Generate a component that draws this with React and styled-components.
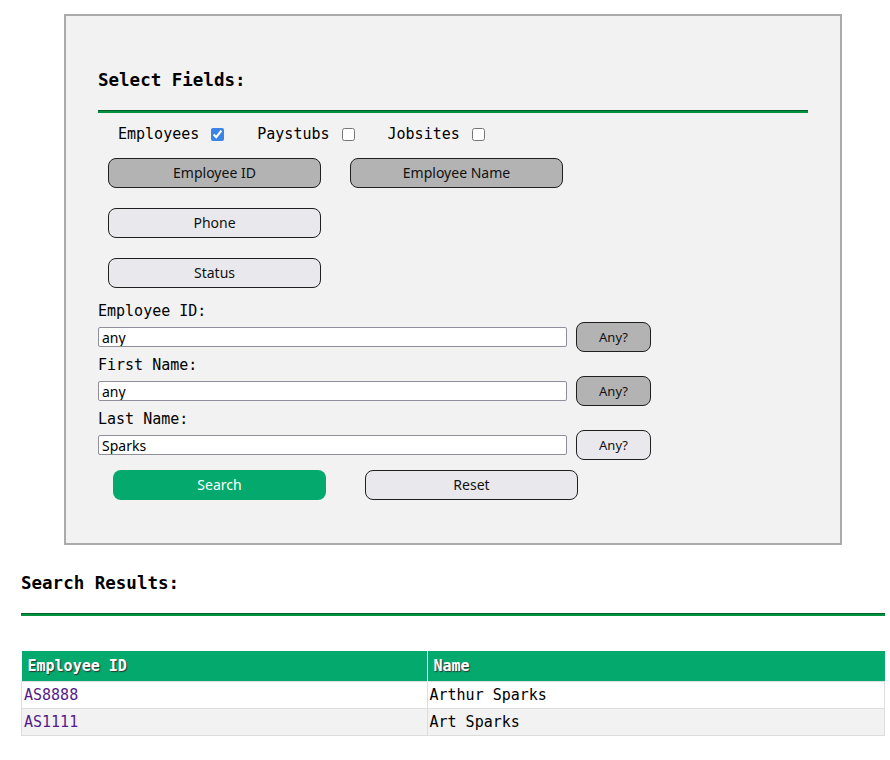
import React, { useState } from 'react';
import styled, { createGlobalStyle } from 'styled-components';

const GlobalStyle = createGlobalStyle`
  body {
    margin: 0;
    background: #ffffff;
    font-family: "DejaVu Sans Mono", monospace;
    font-size: 15px;
    color: #000;
  }
`;

const Page = styled.div`
  width: 864px;
  padding: 14px 0 20px 21px;
`;

const Panel = styled.section`
  box-sizing: border-box;
  width: 778px;
  margin: 0 auto;
  padding: 54px 32px 43px 32px;
  background: #f2f2f2;
  border: 2px solid #aaaaaa;
`;

const Heading = styled.h3`
  margin: 0;
  font-size: 17.5px;
  line-height: 20px;
  font-weight: bold;
`;

const Rule = styled.hr`
  margin: 20px 0 0 0;
  height: 0;
  border: none;
  border-top: 1px solid #00602b;
  border-bottom: 2px solid #00923f;
`;

const CheckRow = styled.div`
  display: flex;
  align-items: center;
  height: 20px;
  margin: 11px 0 0 20px;
`;

const CheckLabel = styled.label`
  display: flex;
  align-items: center;
  gap: 12px;
  margin-right: 33px;
  line-height: 20px;
`;

const Box = styled.input`
  width: 13px;
  height: 13px;
  margin: 0;
  accent-color: #3a84e6;
`;

const FieldGrid = styled.div`
  display: flex;
  flex-direction: column;
  gap: 20px;
  margin: 14px 0 0 10px;
`;

const FieldRow = styled.div`
  display: flex;
  gap: 29px;
`;

const PillButton = styled.button`
  box-sizing: border-box;
  width: ${p => p.$width || 213}px;
  height: 30px;
  padding: 0 0 1px 0;
  border: 1px solid #1f1f1f;
  border-radius: 8px;
  background: ${p => (p.$on ? '#b3b3b3' : '#e9e9ed')};
  color: #111;
  font-family: "Noto Sans", sans-serif;
  font-size: ${p => p.$size || 14}px;
  cursor: pointer;
`;

const SearchButton = styled(PillButton)`
  border: none;
  background: #04aa6d;
  color: #ffffff;
`;

const FieldList = styled.div`
  margin-top: 13px;
`;

const FieldLabel = styled.label`
  display: block;
  line-height: 20px;
`;

const InputRow = styled.div`
  display: flex;
  align-items: center;
  gap: 9px;
  margin: 1px 0 3px 0;
`;

const TextInput = styled.input`
  box-sizing: border-box;
  width: 469px;
  height: 20px;
  padding: 0 3px;
  border: 1px solid #8f8f9d;
  border-radius: 2px;
  background: #fff;
  font-family: "Noto Sans", sans-serif;
  font-size: 14px;
  color: #000;
`;

const ActionRow = styled.div`
  display: flex;
  gap: 39px;
  margin: 10px 0 0 15px;
`;

const Results = styled.section`
  margin-top: 28px;
`;

const Table = styled.table`
  width: 864px;
  margin-top: 35px;
  border-collapse: collapse;
  table-layout: fixed;
`;

const Th = styled.th`
  height: 30px;
  padding: 0 6px;
  text-align: left;
  background: #04aa6d;
  color: #ffffff;
  font-weight: bold;
  text-shadow: 1px 1px 1px #333;
  border-left: ${p => (p.$first ? 'none' : '1px solid #ffffff')};
  width: ${p => (p.$first ? '393px' : 'auto')};
`;

const Tr = styled.tr`
  background: ${p => (p.$alt ? '#f2f2f2' : '#ffffff')};
`;

const Td = styled.td`
  height: 26px;
  padding: 0 2px;
  border: 1px solid #dddddd;
`;

const IdLink = styled.a`
  color: #551a8b;
  text-decoration: none;
`;

const fieldRows = [
  [{ label: 'Employee ID', on: true }, { label: 'Employee Name', on: true }],
  [{ label: 'Phone', on: false }],
  [{ label: 'Status', on: false }],
];

const results = [
  { id: 'AS8888', name: 'Arthur Sparks' },
  { id: 'AS1111', name: 'Art Sparks' },
];

const App = () => {
  const [fields, setFields] = useState([
    { label: 'Employee ID:', value: 'any', any: true },
    { label: 'First Name:', value: 'any', any: true },
    { label: 'Last Name:', value: 'Sparks', any: false },
  ]);

  const handleChange = (i, value) => {
    setFields(fields.map((f, j) => (j === i ? { ...f, value } : f)));
  };

  return (
    <Page>
      <GlobalStyle />
      <Panel>
        <Heading>Select Fields:</Heading>
        <Rule />
        <CheckRow>
          <CheckLabel>Employees <Box type="checkbox" defaultChecked /></CheckLabel>
          <CheckLabel>Paystubs <Box type="checkbox" /></CheckLabel>
          <CheckLabel>Jobsites <Box type="checkbox" /></CheckLabel>
        </CheckRow>
        <FieldGrid>
          {fieldRows.map((row, i) => (
            <FieldRow key={i}>
              {row.map(b => (
                <PillButton key={b.label} $on={b.on}>{b.label}</PillButton>
              ))}
            </FieldRow>
          ))}
        </FieldGrid>
        <FieldList>
          {fields.map((f, i) => (
            <div key={f.label}>
              <FieldLabel>{f.label}</FieldLabel>
              <InputRow>
                <TextInput value={f.value} onChange={e => handleChange(i, e.target.value)} />
                <PillButton $width={75} $size={13} $on={f.any}>Any?</PillButton>
              </InputRow>
            </div>
          ))}
        </FieldList>
        <ActionRow>
          <SearchButton>Search</SearchButton>
          <PillButton>Reset</PillButton>
        </ActionRow>
      </Panel>
      <Results>
        <Heading>Search Results:</Heading>
        <Rule />
        <Table>
          <thead>
            <tr>
              <Th $first>Employee ID</Th>
              <Th>Name</Th>
            </tr>
          </thead>
          <tbody>
            {results.map((r, i) => (
              <Tr key={r.id} $alt={i % 2 === 1}>
                <Td><IdLink href="#">{r.id}</IdLink></Td>
                <Td>{r.name}</Td>
              </Tr>
            ))}
          </tbody>
        </Table>
      </Results>
    </Page>
  );
};

export default App;
